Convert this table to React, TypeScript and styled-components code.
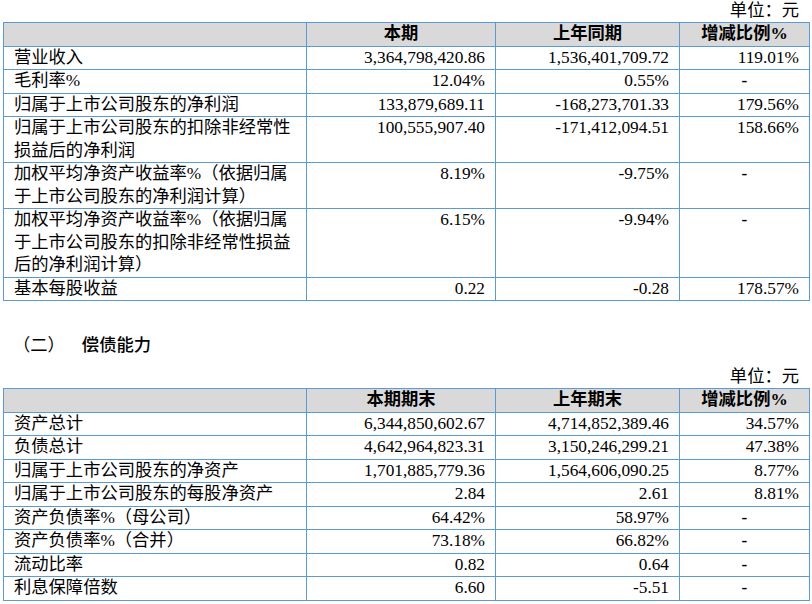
import React from 'react';
import styled, { createGlobalStyle } from 'styled-components';

const GlobalStyle = createGlobalStyle`
  body {
    margin: 0;
    background: #fff;
    color: #000;
    font-family: 'Liberation Serif', 'Noto Sans CJK SC', serif;
    font-size: 17.3px;
  }
`;

const Page = styled.div`
  width: 812px;
  padding-left: 3px;
  box-sizing: border-box;
`;

const UnitLine = styled.div<{ $top?: number }>`
  height: 22px;
  line-height: 22px;
  margin-top: ${p => p.$top || 0}px;
  width: 806px;
  text-align: right;
  padding-right: 10px;
  box-sizing: border-box;
`;

const Heading = styled.div`
  margin-top: 33px;
  padding-left: 10px;
  line-height: 23px;
  display: flex;
`;

const HeadingTitle = styled.span`
  margin-left: 17px;
  font-weight: 500;
`;

const Table = styled.table`
  width: 806px;
  border-collapse: collapse;
  table-layout: fixed;
`;

const HeadCell = styled.th`
  background: #d9d9d9;
  border: 1px solid #5b9bd5;
  font-weight: 700;
  text-align: center;
  line-height: 22.5px;
  padding: 0 10px;
`;

const Cell = styled.td<{ $align?: 'left' | 'right' | 'center' }>`
  border: 1px solid #5b9bd5;
  line-height: 22.5px;
  padding: 0 10px;
  vertical-align: top;
  text-align: ${p => p.$align || 'right'};
  white-space: pre-line;
`;

const Dash = styled.span`
  font-weight: 700;
`;

type Row = [string, string, string, string];

const profitRows: Row[] = [
    ['营业收入', '3,364,798,420.86', '1,536,401,709.72', '119.01%'],
    ['毛利率%', '12.04%', '0.55%', '-'],
    ['归属于上市公司股东的净利润', '133,879,689.11', '-168,273,701.33', '179.56%'],
    ['归属于上市公司股东的扣除非经常性\n损益后的净利润', '100,555,907.40', '-171,412,094.51', '158.66%'],
    ['加权平均净资产收益率%（依据归属\n于上市公司股东的净利润计算）', '8.19%', '-9.75%', '-'],
    ['加权平均净资产收益率%（依据归属\n于上市公司股东的扣除非经常性损益\n后的净利润计算）', '6.15%', '-9.94%', '-'],
    ['基本每股收益', '0.22', '-0.28', '178.57%'],
];

const debtRows: Row[] = [
    ['资产总计', '6,344,850,602.67', '4,714,852,389.46', '34.57%'],
    ['负债总计', '4,642,964,823.31', '3,150,246,299.21', '47.38%'],
    ['归属于上市公司股东的净资产', '1,701,885,779.36', '1,564,606,090.25', '8.77%'],
    ['归属于上市公司股东的每股净资产', '2.84', '2.61', '8.81%'],
    ['资产负债率%（母公司）', '64.42%', '58.97%', '-'],
    ['资产负债率%（合并）', '73.18%', '66.82%', '-'],
    ['流动比率', '0.82', '0.64', '-'],
    ['利息保障倍数', '6.60', '-5.51', '-'],
];

const DataTable: React.FC<{ heads: [string, string, string]; rows: Row[] }> = ({ heads, rows }) => (
    <Table>
        <colgroup>
            <col style={{ width: 303 }} />
            <col style={{ width: 189 }} />
            <col style={{ width: 184 }} />
            <col style={{ width: 130 }} />
        </colgroup>
        <thead>
            <tr>
                <HeadCell />
                {heads.map(h => <HeadCell key={h}>{h}</HeadCell>)}
            </tr>
        </thead>
        <tbody>
            {rows.map(r => (
                <tr key={r[0]}>
                    <Cell $align="left">{r[0]}</Cell>
                    <Cell>{r[1]}</Cell>
                    <Cell>{r[2]}</Cell>
                    {r[3] === '-'
                        ? <Cell $align="center"><Dash>-</Dash></Cell>
                        : <Cell>{r[3]}</Cell>}
                </tr>
            ))}
        </tbody>
    </Table>
);

const App: React.FC = () => (
    <Page>
        <GlobalStyle />
        <UnitLine>单位：元</UnitLine>
        <DataTable heads={['本期', '上年同期', '增减比例%']} rows={profitRows} />
        <Heading>
            <span>（二）</span>
            <HeadingTitle>偿债能力</HeadingTitle>
        </Heading>
        <UnitLine $top={9}>单位：元</UnitLine>
        <DataTable heads={['本期期末', '上年期末', '增减比例%']} rows={debtRows} />
    </Page>
);

export default App;
